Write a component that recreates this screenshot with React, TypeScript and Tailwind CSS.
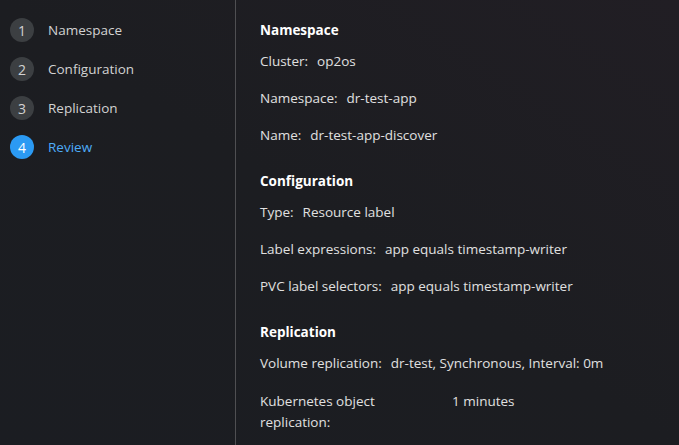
import React from "react";

type Row = { label: string; value: string };
type Section = { title: string; rows: Row[] };

const steps = ["Namespace", "Configuration", "Replication", "Review"];

const sections: Section[] = [
  {
    title: "Namespace",
    rows: [
      { label: "Cluster:", value: "op2os" },
      { label: "Namespace:", value: "dr-test-app" },
      { label: "Name:", value: "dr-test-app-discover" },
    ],
  },
  {
    title: "Configuration",
    rows: [
      { label: "Type:", value: "Resource label" },
      { label: "Label expressions:", value: "app equals timestamp-writer" },
      { label: "PVC label selectors:", value: "app equals timestamp-writer" },
    ],
  },
  {
    title: "Replication",
    rows: [
      { label: "Volume replication:", value: "dr-test, Synchronous, Interval: 0m" },
    ],
  },
];

const App: React.FC = (): React.ReactElement => {
  const current = 3;

  return (
    <div
      className="w-[679px] h-[445px] overflow-hidden flex text-[13.5px] leading-[21px] text-[#e0e0e0] bg-gradient-to-bl from-[#211e24] via-[#1c1d21] to-[#1b1d22]"
      style={{ fontFamily: '"Open Sans", "Liberation Sans", sans-serif' }}
    >
      {/* steps */}
      <nav className="w-[236px] shrink-0 border-r border-[#4f4f52] pt-[18px] pl-[10px]">
        <ul className="flex flex-col gap-[15px]">
          {steps.map((step, i) => {
            const active = i === current;
            return (
              <li key={step} className="flex items-center h-[24px]">
                <span
                  className={`w-[24px] h-[24px] rounded-full flex items-center justify-center text-[14px] ${
                    active ? "bg-[#2b9af3] text-white" : "bg-[#3c3f42] text-[#d2d2d2]"
                  }`}
                >
                  {i + 1}
                </span>
                <span className={`ml-[14px] ${active ? "text-[#4dabf7]" : "text-[#d2d2d2]"}`}>{step}</span>
              </li>
            );
          })}
        </ul>
      </nav>

      {/* review */}
      <main className="flex-1 pl-[24px] pt-[20px]">
        {sections.map((section) => (
          <section key={section.title} className="mb-[25px]">
            <h3 className="font-bold text-white text-[13.5px] leading-[21px]">{section.title}</h3>
            <div className="flex flex-col gap-[16px] mt-[10px]">
              {section.rows.map((row) => (
                <div key={row.label} className="flex gap-[9px]">
                  <span>{row.label}</span>
                  <span>{row.value}</span>
                </div>
              ))}
              {section.title === "Replication" && (
                <div className="grid grid-cols-[192px_1fr] mt-[1px]">
                  <span className="max-w-[130px]">Kubernetes object replication:</span>
                  <span>1 minutes</span>
                </div>
              )}
            </div>
          </section>
        ))}
      </main>
    </div>
  );
};

export default App;
